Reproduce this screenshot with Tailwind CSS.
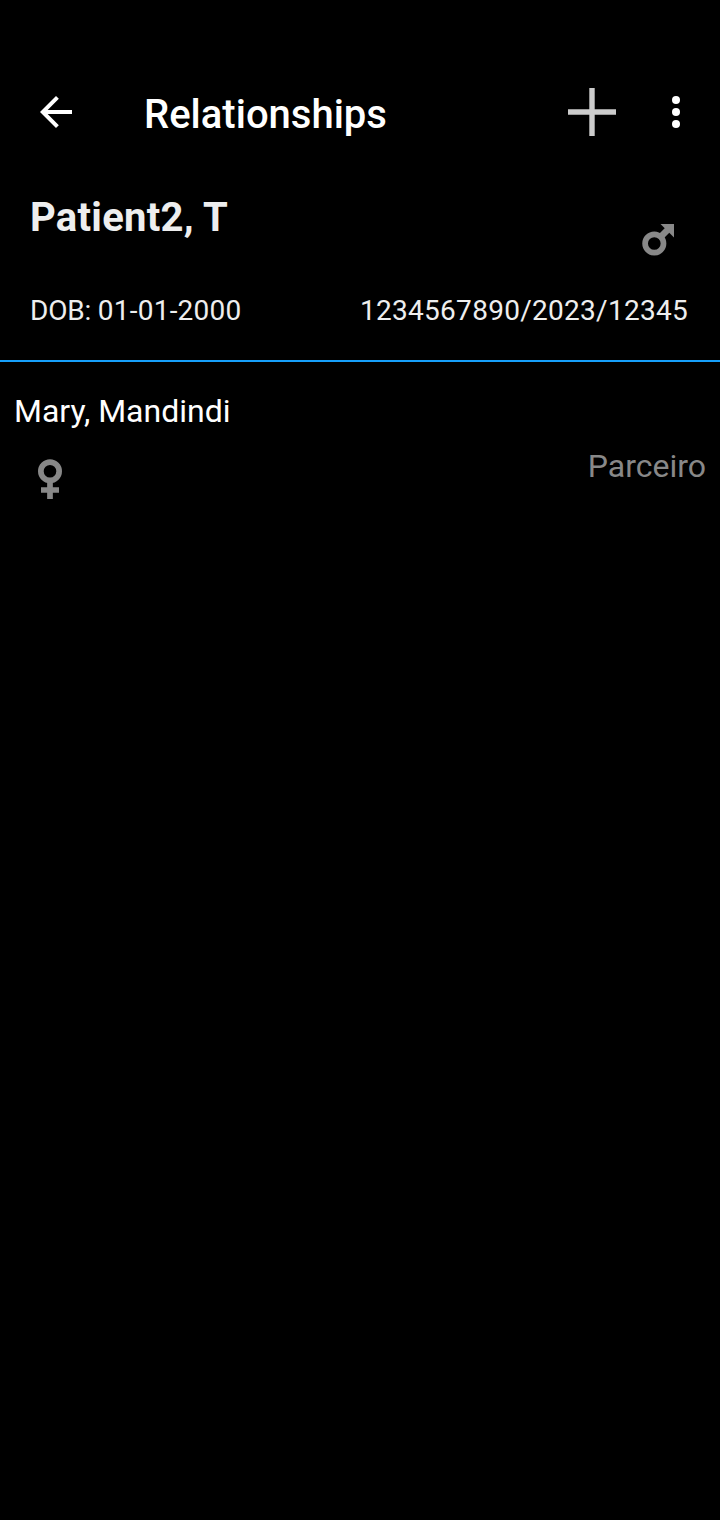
<!DOCTYPE html>
<html lang="en"><head><meta charset="utf-8"><title>Relationships</title>
<script src="https://cdn.jsdelivr.net/npm/@tailwindcss/browser@4"></script></head>
<body class="bg-black font-[Roboto,sans-serif] text-white">
<main class="h-[1520px] w-[720px] overflow-hidden bg-black pt-14">
<header class="flex h-28 items-center">
<svg class="ml-8 size-12" viewBox="0 0 24 24" fill="#fff"><path d="M20 11H7.830l5.590-5.590L12 4l-8 8 8 8 1.410-1.410L7.830 13H20z"/></svg>
<h1 class="ml-16 flex-1 pt-1.5 text-[40px] leading-[48px] font-medium">Relationships</h1>
<svg class="size-12" viewBox="0 0 48 48" fill="#ccc"><path d="M21.300 0h5.400v21.300H48v5.400H26.700V48h-5.400V26.700H0v-5.400h21.300z"/></svg>
<svg class="mr-5 ml-9 size-12" viewBox="0 0 24 24" fill="#fff"><circle cx="12" cy="6" r="2"/><circle cx="12" cy="12" r="2"/><circle cx="12" cy="18" r="2"/></svg>
</header>
<section class="h-[194px] border-b-2 border-[#169ffa] pr-8 pl-[30px] text-[#eee]">
<div class="flex h-[112px] justify-between pt-[25px]">
<h2 class="text-[40px] leading-[50px] font-bold tracking-[0.27px]">Patient2, T</h2>
<svg class="mt-[31px] mr-[14px] size-8" viewBox="0 0 32 32" fill="none" stroke="#888" stroke-width="5.700"><circle cx="12.300" cy="19.500" r="9.200"/><path d="M18 13.500l8-8" stroke-width="6.500"/><path d="M18.500 0H32v13.500z" fill="#888" stroke="none"/></svg>
</div>
<div class="flex justify-between pt-[13px] text-[28px] leading-9"><span><span class="tracking-[-0.2px]">DOB: </span><span class="tracking-[0.230px]">01-01-2000</span></span><span class="tracking-[0.280px]">1234567890/2023/12345</span></div>
</section>
<section class="px-[14px] pt-[30px] text-[32px] leading-[38px]">
<div>Mary, Mandindi</div>
<div class="flex justify-between pt-[17px]">
<svg class="mt-[12px] ml-6 h-10 w-6" viewBox="0 0 24 40" fill="none" stroke="#888" stroke-width="5.700"><circle cx="12" cy="12.200" r="9.150"/><path d="M12 21v19M3 31h18"/></svg>
<span class="text-[#888]">Parceiro</span></div>
</section>
</main></body></html>
